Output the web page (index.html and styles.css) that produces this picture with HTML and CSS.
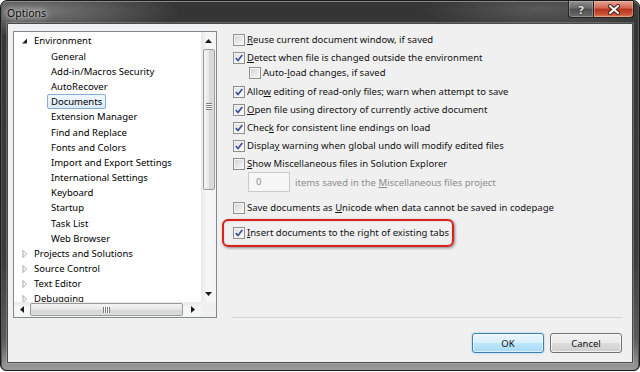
FILE: index.html
```html
<!DOCTYPE html>
<html lang="en">
<head>
    <meta charset="UTF-8" />
    <title>Options</title>
    <link rel="stylesheet" href="styles.css">
</head>
<body>
    <div class="window">
        <div class="titlebar">
            <span class="title">Options</span>
            <div class="caption">
                <span class="cap-btn help">?</span>
                <span class="cap-btn close">
                    <svg width="14" height="11" viewBox="0 0 14 11"><path d="M3 2 L11 9 M11 2 L3 9" stroke="#3a1a14" stroke-width="4" stroke-linecap="round"/><path d="M3 2 L11 9 M11 2 L3 9" stroke="#fff" stroke-width="2.2" stroke-linecap="round"/></svg>
                </span>
            </div>
        </div>
        <div class="client">
            <div class="main">
                <div class="tree">
                    <div class="tree-view">
                        <div class="node top"><svg class="twisty" width="10" height="8" viewBox="0 0 10 8"><polygon points="7,1.5 7,6.5 2,6.5" fill="#262626"/></svg><span class="label">Environment</span></div>
                        <div class="node child"><span class="label">General</span></div>
                        <div class="node child"><span class="label">Add-in/Macros Security</span></div>
                        <div class="node child"><span class="label">AutoRecover</span></div>
                        <div class="node child"><span class="label selected">Documents</span></div>
                        <div class="node child"><span class="label">Extension Manager</span></div>
                        <div class="node child"><span class="label">Find and Replace</span></div>
                        <div class="node child"><span class="label">Fonts and Colors</span></div>
                        <div class="node child"><span class="label">Import and Export Settings</span></div>
                        <div class="node child"><span class="label">International Settings</span></div>
                        <div class="node child"><span class="label">Keyboard</span></div>
                        <div class="node child"><span class="label">Startup</span></div>
                        <div class="node child"><span class="label">Task List</span></div>
                        <div class="node child"><span class="label">Web Browser</span></div>
                        <div class="node top"><svg class="twisty" width="10" height="8" viewBox="0 0 10 8"><polygon points="3,0.5 6.5,4 3,7.5" fill="#fff" stroke="#a6a6a6"/></svg><span class="label">Projects and Solutions</span></div>
                        <div class="node top"><svg class="twisty" width="10" height="8" viewBox="0 0 10 8"><polygon points="3,0.5 6.5,4 3,7.5" fill="#fff" stroke="#a6a6a6"/></svg><span class="label">Source Control</span></div>
                        <div class="node top"><svg class="twisty" width="10" height="8" viewBox="0 0 10 8"><polygon points="3,0.5 6.5,4 3,7.5" fill="#fff" stroke="#a6a6a6"/></svg><span class="label">Text Editor</span></div>
                        <div class="node top"><svg class="twisty" width="10" height="8" viewBox="0 0 10 8"><polygon points="3,0.5 6.5,4 3,7.5" fill="#fff" stroke="#a6a6a6"/></svg><span class="label">Debugging</span></div>
                    </div>
                    <div class="vscroll">
                        <span class="sb-btn"><svg width="7" height="4" viewBox="0 0 7 4"><polygon points="3.5,0 7,4 0,4" fill="#1a1a1a"/></svg></span>
                        <span class="thumb-v"><span class="grip-v"></span></span>
                        <span class="track"></span>
                        <span class="sb-btn"><svg width="7" height="4" viewBox="0 0 7 4"><polygon points="0,0 7,0 3.5,4" fill="#1a1a1a"/></svg></span>
                    </div>
                    <div class="hscroll">
                        <span class="sb-btn"><svg width="4" height="7" viewBox="0 0 4 7"><polygon points="4,0 4,7 0,3.5" fill="#1a1a1a"/></svg></span>
                        <span class="thumb-h"><span class="grip-h"></span></span>
                        <span class="track"></span>
                        <span class="sb-btn"><svg width="4" height="7" viewBox="0 0 4 7"><polygon points="0,0 4,3.5 0,7" fill="#1a1a1a"/></svg></span>
                    </div>
                    <div class="corner"></div>
                </div>

                <div class="pane">
                    <div class="opt"><span class="cb"></span><span><u>R</u>euse current document window, if saved</span></div>
                    <div class="opt"><span class="cb checked"><svg viewBox="0 0 10 10"><path d="M1.8 5.2 L4 7.5 L8.3 2"/></svg></span><span><u>D</u>etect when file is changed outside the environment</span></div>
                    <div class="opt sub tight"><span class="cb"></span><span>Auto-<u>l</u>oad changes, if saved</span></div>
                    <div class="opt gap1"><span class="cb checked"><svg viewBox="0 0 10 10"><path d="M1.8 5.2 L4 7.5 L8.3 2"/></svg></span><span>Allo<u>w</u> editing of read-only files; warn when attempt to save</span></div>
                    <div class="opt"><span class="cb checked"><svg viewBox="0 0 10 10"><path d="M1.8 5.2 L4 7.5 L8.3 2"/></svg></span><span><u>O</u>pen file using directory of currently active document</span></div>
                    <div class="opt"><span class="cb checked"><svg viewBox="0 0 10 10"><path d="M1.8 5.2 L4 7.5 L8.3 2"/></svg></span><span>Chec<u>k</u> for consistent line endings on load</span></div>
                    <div class="opt"><span class="cb checked"><svg viewBox="0 0 10 10"><path d="M1.8 5.2 L4 7.5 L8.3 2"/></svg></span><span>Displa<u>y</u> warning when global undo will modify edited files</span></div>
                    <div class="opt"><span class="cb"></span><span><u>S</u>how Miscellaneous files in Solution Explorer</span></div>
                    <div class="misc-row">
                        <span class="num-box">0</span>
                        <span class="misc-label">items saved in the <u>M</u>iscellaneous files project</span>
                    </div>
                    <div class="opt after-misc"><span class="cb"></span><span>Save documents as <u>U</u>nicode when data cannot be saved in codepage</span></div>
                    <div class="opt last"><span class="cb checked"><svg viewBox="0 0 10 10"><path d="M1.8 5.2 L4 7.5 L8.3 2"/></svg></span><span><u>I</u>nsert documents to the right of existing tabs</span><span class="callout"></span></div>
                </div>
            </div>
            <div class="buttons">
                <button class="btn default">OK</button>
                <button class="btn">Cancel</button>
            </div>
        </div>
    </div>
</body>
</html>
```

FILE: styles.css
```css
* {
    margin: 0;
    padding: 0;
    box-sizing: border-box;
}
body {
    background: #fff;
    font-family: "Noto Sans", "Open Sans", sans-serif;
    font-size: 9.5px;
    color: #111;
}
u { text-decoration-thickness: 1px; text-underline-offset: 1px; }

/* window frame */
.window {
    width: 640px;
    height: 371px;
    border: 1px solid #1b1b1b;
    border-radius: 7px 7px 6px 6px;
    padding: 0 6px 7px 6px;
    display: flex;
    flex-direction: column;
    background:
        radial-gradient(ellipse 150px 26px at 30px 10px, #7a7a7a, rgba(110,110,110,0) 100%),
        radial-gradient(ellipse 120px 24px at 540px 8px, #595959, rgba(80,80,80,0) 100%),
        linear-gradient(to bottom, #353535 0%, #3c3c3c 70%, #5e5e5e 92%, #9c9c9c 100%);
    box-shadow: inset 0 1px 0 #888, inset 1px 0 0 #555, inset -1px 0 0 #555;
}
.titlebar {
    height: 22px;
    display: flex;
    align-items: flex-start;
}
.title {
    font-family: "Noto Sans", sans-serif;
    font-size: 10.5px;
    color: #0c0c0c;
    padding-top: 5px;
    text-shadow: 0 0 6px #d8d8d8, 0 0 10px #cfcfcf, 0 0 3px #c8c8c8;
}
.caption {
    margin-left: auto;
    margin-right: -1px;
    display: flex;
}
.cap-btn {
    height: 17px;
    display: flex;
    align-items: center;
    justify-content: center;
    border: 1px solid #232323;
    border-top: none;
}
.help {
    width: 25px;
    border-radius: 0 0 0 4px;
    border-right: none;
    background: linear-gradient(to bottom, #8d8d8d, #6a6a6a 45%, #4f4f4f 50%, #6b6b6b);
    box-shadow: inset 0 0 0 1px rgba(255,255,255,0.25);
    color: #f2f2f2;
    font-weight: bold;
    font-size: 11px;
    text-shadow: 0 0 2px #000;
}
.close {
    width: 41px;
    border-radius: 0 0 4px 0;
    background: linear-gradient(to bottom, #e6a496, #d3634f 45%, #b8301c 50%, #cd5738 85%, #e08a60);
    box-shadow: inset 0 0 0 1px rgba(255,220,200,0.35);
}

.client {
    flex: 1;
    background: #f0f0f0;
    border: 1px solid #4a4a4a;
    box-shadow: 0 0 0 1px rgba(255,255,255,0.22);
    padding: 7px 10px 0 5px;
    display: flex;
    flex-direction: column;
}
.main {
    display: flex;
    gap: 15px;
    height: 287px;
}

/* tree view */
.tree {
    width: 204px;
    border: 1px solid #828790;
    background: #fff;
    display: grid;
    grid-template-columns: 1fr 15px;
    grid-template-rows: 1fr 15px;
}
.tree-view {
    overflow: hidden;
    padding-top: 1.4px;
}
.node {
    height: 15.18px;
    display: flex;
    align-items: center;
    white-space: nowrap;
    color: #000;
}
.node.top { padding-left: 6px; }
.node.child { padding-left: 33px; }
.twisty { margin-right: 4px; margin-top: 1px; }
.node.top .label { padding: 0; border: none; }
.label {
    padding: 0 3px;
    border: 1px solid transparent;
    border-radius: 2px;
    line-height: 13px;
}
.label.selected {
    border-color: #84acdd;
    background: linear-gradient(to bottom, #f2f8fe, #dbeafc);
}

.vscroll {
    display: flex;
    flex-direction: column;
    background: linear-gradient(to right, #e8e8e8, #f7f7f7 40%, #f4f4f4);
}
.hscroll {
    display: flex;
    background: linear-gradient(to bottom, #e8e8e8, #f7f7f7 40%, #f4f4f4);
}
.corner { background: #f0f0f0; }
.sb-btn {
    flex: 0 0 16px;
    display: flex;
    align-items: center;
    justify-content: center;
}
.vscroll .sb-btn { flex-basis: 17px; }
.track { flex: 1; }
.thumb-v {
    height: 141px;
    margin: 0 1px 0 2px;
    border: 1px solid #9a9a9a;
    border-radius: 2px;
    background: linear-gradient(to right, #f4f4f4, #e7e7e7 50%, #d6d6d6 51%, #dcdcdc);
    display: flex;
    align-items: center;
    justify-content: center;
}
.grip-v {
    width: 6px;
    height: 7px;
    margin-top: -26px;
    background: repeating-linear-gradient(to bottom, #7f7f7f 0 1px, #fafafa 1px 2px);
}
.thumb-h {
    width: 153px;
    margin: 1px 0 1px 0;
    border: 1px solid #9a9a9a;
    border-radius: 2px;
    background: linear-gradient(to bottom, #f4f4f4, #e7e7e7 50%, #d6d6d6 51%, #dcdcdc);
    display: flex;
    align-items: center;
    justify-content: center;
}
.grip-h {
    width: 7px;
    height: 6px;
    background: repeating-linear-gradient(to right, #7f7f7f 0 1px, #fafafa 1px 2px);
}

/* options pane */
.pane {
    flex: 1;
    display: flex;
    flex-direction: column;
    gap: 3px;
    padding: 1px 0 0 1px;
    border-bottom: 1px solid #d5d5d5;
}
.opt {
    position: relative;
    height: 15px;
    display: flex;
    align-items: center;
    gap: 2px;
    white-space: nowrap;
}
.opt.sub { padding-left: 16px; }
.opt.tight { margin-top: -3px; }
.opt.gap1 { margin-top: 1px; }
.opt.after-misc { margin-top: 5px; }
.opt.last { margin-top: 7px; }
.cb {
    flex: 0 0 12px;
    width: 12px;
    height: 12px;
    border: 1px solid #8e8f8f;
    background: linear-gradient(135deg, #cfd1d4, #eeeeee 70%, #fbfbfb);
    box-shadow: inset 0 0 0 1px #f6f6f6;
    display: flex;
}
.cb.checked { background: linear-gradient(135deg, #dedfe1, #f4f4f4 70%, #fff); }
.cb svg {
    width: 10px;
    height: 10px;
    fill: none;
    stroke: #3e5196;
    stroke-width: 1.7;
}
.misc-row {
    margin-top: -2px;
    padding-left: 15px;
    display: flex;
    align-items: center;
    gap: 5px;
    height: 20px;
}
.num-box {
    width: 42px;
    height: 20px;
    border: 1px solid #c9cacd;
    background: #f7f7f7;
    color: #8d8d8d;
    padding-left: 7px;
    line-height: 18px;
}
.misc-label { color: #8d8d8d; }

.callout {
    position: absolute;
    left: -11px;
    top: -6px;
    width: 232px;
    height: 28px;
    border: 2px solid #d8221a;
    border-radius: 6px;
    box-shadow: 1px 1px 3px rgba(0,0,0,0.45), inset 0 0 1px rgba(120,0,0,0.6);
}

/* dialog buttons */
.buttons {
    margin-top: 15px;
    display: flex;
    justify-content: flex-end;
    gap: 6px;
}
.btn {
    width: 72px;
    height: 20px;
    font-family: "Noto Sans", sans-serif;
    font-size: 9.5px;
    color: #111;
    border: 1px solid #707070;
    border-radius: 3px;
    background: linear-gradient(to bottom, #f2f2f2, #ebebeb 50%, #dddddd 51%, #cfcfcf);
    box-shadow: inset 0 0 0 1px rgba(255,255,255,0.7);
}
.btn.default {
    border-color: #3c7fb1;
    background: linear-gradient(to bottom, #eaf6fd, #d9f0fc 50%, #bee6fd 51%, #a7d9f5);
    box-shadow: inset 0 0 0 1px rgba(255,255,255,0.6), 0 0 2px #7fc4ea;
}
```
